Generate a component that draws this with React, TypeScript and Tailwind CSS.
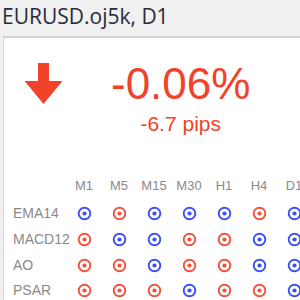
const COLS = ["M1", "M5", "M15", "M30", "H1", "H4", "D1"];

const ROWS: { name: string; sig: ("b" | "r")[] }[] = [
  { name: "EMA14", sig: ["b", "r", "b", "b", "b", "r", "b"] },
  { name: "MACD12", sig: ["r", "b", "b", "r", "r", "b", "b"] },
  { name: "AO", sig: ["r", "r", "b", "r", "r", "b", "b"] },
  { name: "PSAR", sig: ["r", "r", "r", "b", "r", "r", "b"] },
];

function Dot({ kind }: { kind: "b" | "r" }) {
  const c = kind === "b" ? "#3c4ef5" : "#f2513a";
  return (
    <svg width="15" height="15" viewBox="0 0 15 15">
      <circle cx="7.5" cy="7.5" r="5.8" fill="none" stroke={c} strokeWidth="1.9" />
      <circle cx="7.5" cy="7.5" r="2.1" fill={c} />
    </svg>
  );
}

export default function App() {
  return (
    <div className="w-[300px] h-[300px] overflow-hidden bg-[#f0f0f0] font-['Liberation_Sans',Arial,sans-serif]">
      <div className="h-[36px] pl-[2px] pt-[3px] text-[21px] leading-[27px] text-[#2b2b3b] font-['Open_Sans',sans-serif] whitespace-nowrap">
        EURUSD.oj5k, D1
      </div>
      <div className="ml-[3px] h-[264px] bg-white border-t-2 border-l border-[#d4d4d4]">
        <div className="flex pt-[24px]">
          <svg width="38" height="42" viewBox="0 0 38 42" className="ml-[21px] mt-[1px]">
            <path d="M13 0 H24 V18 H37.5 L18.5 41 L-0.5 18 H13 Z" fill="#f0432a" />
          </svg>
          <div className="ml-[48px] flex flex-col items-center">
            <div className="text-[44px] leading-[44px] text-[#f0432a]">-0.06%</div>
            <div className="mt-[6px] text-[21px] leading-[23px] text-[#f0432a]">-6.7 pips</div>
          </div>
        </div>
        <div className="mt-[36px] text-[#8a8a8a]">
          <div className="flex h-[30px] items-center text-[13px]">
            <div className="w-[62.5px] shrink-0" />
            {COLS.map((c) => (
              <div key={c} className="w-[35px] shrink-0 text-center">{c}</div>
            ))}
          </div>
          {ROWS.map((r) => (
            <div key={r.name} className="flex h-[25.7px] items-center text-[14px]">
              <div className="w-[62.5px] shrink-0 pl-[9px] whitespace-nowrap">{r.name}</div>
              {r.sig.map((s, i) => (
                <div key={i} className="w-[35px] shrink-0 flex justify-center">
                  <Dot kind={s} />
                </div>
              ))}
            </div>
          ))}
        </div>
      </div>
    </div>
  );
}
